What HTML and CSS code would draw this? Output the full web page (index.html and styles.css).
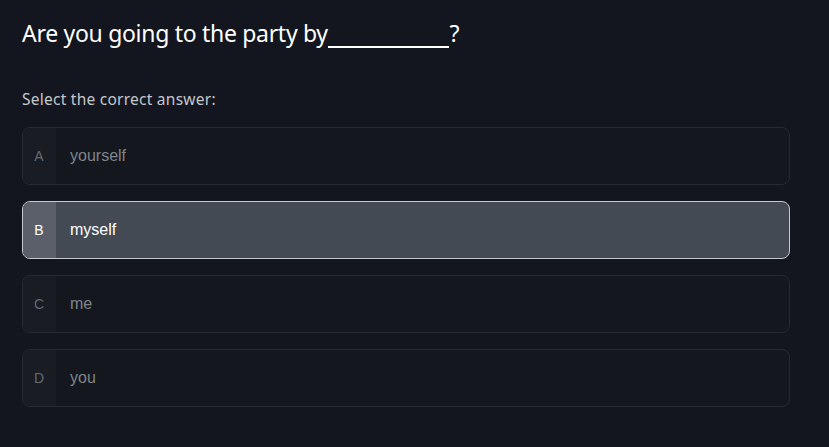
FILE: index.html
```html
<!DOCTYPE html>
<html>
<head>
<meta charset="utf-8">
<link rel="stylesheet" href="styles.css">
</head>
<body>
<div class="quiz">
  <h1 class="question">Are you going to the party by <span class="blank"></span>?</h1>
  <p class="prompt">Select the correct answer:</p>
  <div class="options">
    <div class="option"><span class="letter">A</span><span class="label">yourself</span></div>
    <div class="option selected"><span class="letter">B</span><span class="label">myself</span></div>
    <div class="option"><span class="letter">C</span><span class="label">me</span></div>
    <div class="option"><span class="letter">D</span><span class="label">you</span></div>
  </div>
</div>
</body>
</html>
```
FILE: styles.css
```css
html, body {
  margin: 0;
  padding: 0;
  background: #13161e;
  width: 829px;
  height: 447px;
  overflow: hidden;
}
.quiz {
  padding: 15px 39px 0 22px;
  font-family: "Noto Sans", "Open Sans", sans-serif;
}
.question {
  margin: 0;
  font-size: 23px;
  font-weight: 400;
  color: #ffffff;
  line-height: 36px;
  letter-spacing: -0.3px;
}
.blank {
  display: inline-block;
  width: 121px;
  height: 26px;
  border-bottom: 2px solid #ffffff;
  vertical-align: -6px;
  margin-left: -5px;
}
.prompt {
  margin: 38px 0 0;
  font-size: 15.5px;
  line-height: 20px;
  color: #c4c7cc;
  letter-spacing: 0.25px;
}
.options {
  margin-top: 18px;
  display: flex;
  flex-direction: column;
  gap: 16px;
}
.option {
  display: flex;
  height: 56px;
  border: 1px solid #262a33;
  border-radius: 8px;
  overflow: hidden;
  background: #14171e;
  font-family: "Liberation Sans", Arial, sans-serif;
}
.letter {
  width: 32px;
  flex: none;
  display: flex;
  align-items: center;
  justify-content: center;
  background: #191c23;
  color: #626a76;
  font-size: 14px;
  padding-right: 1px;
}
.label {
  display: flex;
  align-items: center;
  padding-left: 14px;
  color: #80848b;
  font-size: 16px;
}
.option.selected {
  border-color: #c5c9ce;
  background: #434a54;
}
.option.selected .letter {
  background: #5a5f69;
  color: #ffffff;
}
.option.selected .label {
  color: #ffffff;
}
```
